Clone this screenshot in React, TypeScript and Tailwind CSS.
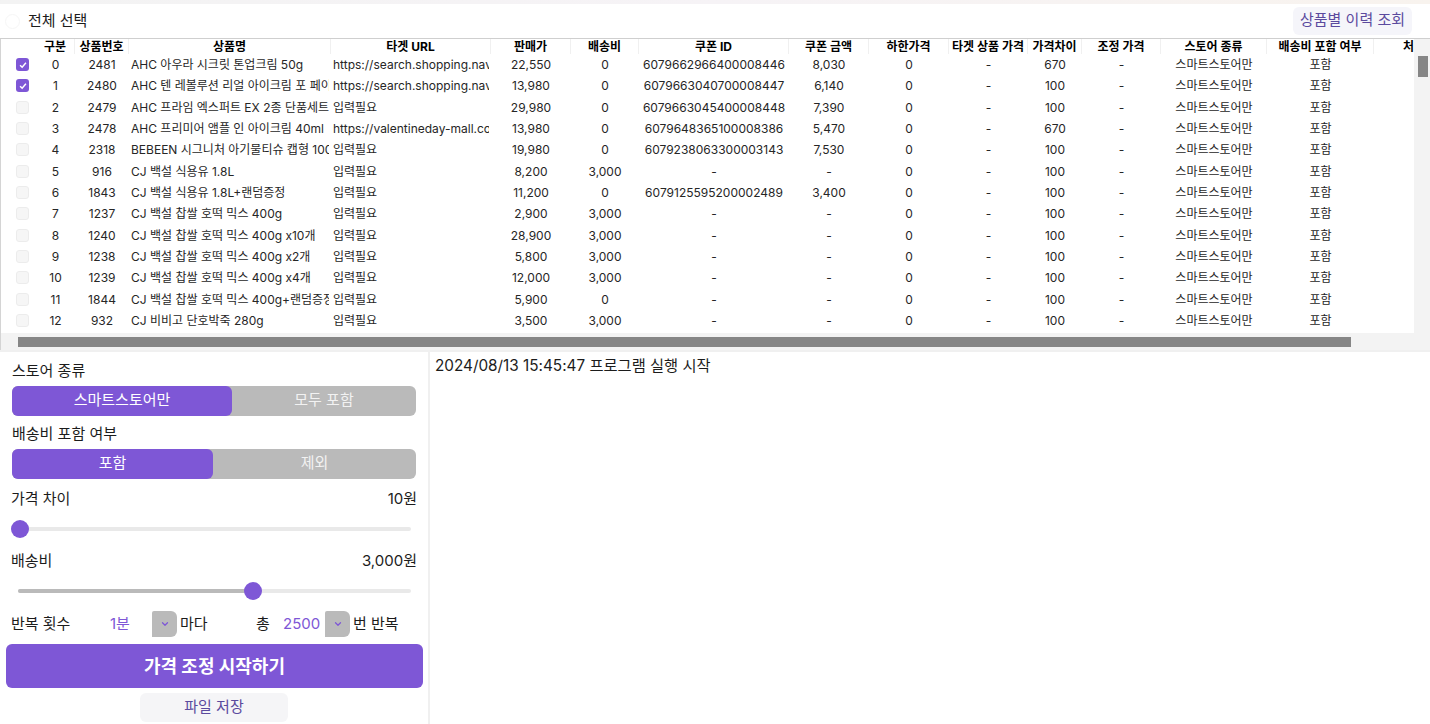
import { ChevronDown } from "lucide-react";

const purple = "bg-[#7e57d6]";

// 컬럼 폭은 헤더 구분선 기준
const columns = [
  { title: "", className: "w-[35px]" },
  { title: "구분", className: "w-[39px]" },
  { title: "상품번호", className: "w-[54px]" },
  { title: "상품명", className: "w-[202px]" },
  { title: "타겟 URL", className: "w-[160px]" },
  { title: "판매가", className: "w-[80px]" },
  { title: "배송비", className: "w-[68px]" },
  { title: "쿠폰 ID", className: "w-[150px]" },
  { title: "쿠폰 금액", className: "w-[80px]" },
  { title: "하한가격", className: "w-[80px]" },
  { title: "타겟 상품 가격", className: "w-[79px]" },
  { title: "가격차이", className: "w-[54px]" },
  { title: "조정 가격", className: "w-[79px]" },
  { title: "스토어 종류", className: "w-[106px]" },
  { title: "배송비 포함 여부", className: "w-[107px]" },
  { title: "처리 상태", className: "w-[106px]" },
];

const rows = [
  { no: "2481", name: "AHC 아우라 시크릿 톤업크림 50g", url: "https://search.shopping.naver.com/", price: "22,550", ship: "0", id: "6079662966400008446", coupon: "8,030", gap: "670", checked: true },
  { no: "2480", name: "AHC 텐 레볼루션 리얼 아이크림 포 페이스", url: "https://search.shopping.naver.com/", price: "13,980", ship: "0", id: "6079663040700008447", coupon: "6,140", gap: "100", checked: true },
  { no: "2479", name: "AHC 프라임 엑스퍼트 EX 2종 단품세트", url: "입력필요", price: "29,980", ship: "0", id: "6079663045400008448", coupon: "7,390", gap: "100" },
  { no: "2478", name: "AHC 프리미어 앰플 인 아이크림 40ml", url: "https://valentineday-mall.com/", price: "13,980", ship: "0", id: "6079648365100008386", coupon: "5,470", gap: "670" },
  { no: "2318", name: "BEBEEN 시그니처 아기물티슈 캡형 100매", url: "입력필요", price: "19,980", ship: "0", id: "6079238063300003143", coupon: "7,530", gap: "100" },
  { no: "916", name: "CJ 백설 식용유 1.8L", url: "입력필요", price: "8,200", ship: "3,000", id: "-", coupon: "-", gap: "100" },
  { no: "1843", name: "CJ 백설 식용유 1.8L+랜덤증정", url: "입력필요", price: "11,200", ship: "0", id: "6079125595200002489", coupon: "3,400", gap: "100" },
  { no: "1237", name: "CJ 백설 찹쌀 호떡 믹스 400g", url: "입력필요", price: "2,900", ship: "3,000", id: "-", coupon: "-", gap: "100" },
  { no: "1240", name: "CJ 백설 찹쌀 호떡 믹스 400g x10개", url: "입력필요", price: "28,900", ship: "3,000", id: "-", coupon: "-", gap: "100" },
  { no: "1238", name: "CJ 백설 찹쌀 호떡 믹스 400g x2개", url: "입력필요", price: "5,800", ship: "3,000", id: "-", coupon: "-", gap: "100" },
  { no: "1239", name: "CJ 백설 찹쌀 호떡 믹스 400g x4개", url: "입력필요", price: "12,000", ship: "3,000", id: "-", coupon: "-", gap: "100" },
  { no: "1844", name: "CJ 백설 찹쌀 호떡 믹스 400g+랜덤증정", url: "입력필요", price: "5,900", ship: "0", id: "-", coupon: "-", gap: "100" },
  { no: "932", name: "CJ 비비고 단호박죽 280g", url: "입력필요", price: "3,500", ship: "3,000", id: "-", coupon: "-", gap: "100" },
];

function Cell({ index, left, children }: { index: number; left?: boolean; children?: React.ReactNode }) {
  return (
    <div className={`${columns[index].className} shrink-0 px-[2px] ${left ? "text-left" : "text-center"}`}>
      <div className="overflow-hidden whitespace-nowrap">{children}</div>
    </div>
  );
}

function TableHeader() {
  return (
    <div className="flex h-[15px] items-center text-[12px] font-bold leading-[15px] text-black">
      {columns.map((col, i) => (
        <div key={i} className={`${col.className} shrink-0 overflow-hidden whitespace-nowrap border-r border-[#f0f0f0] text-center`}>
          {col.title || " "}
        </div>
      ))}
    </div>
  );
}

function CheckBox({ checked }: { checked?: boolean }) {
  if (checked) {
    return (
      <div className={`mx-auto flex h-[13px] w-[13px] items-center justify-center rounded-[3px] ${purple}`}>
        <svg viewBox="0 0 12 12" className="h-[10px] w-[10px]" fill="none" stroke="white" strokeWidth="1.8">
          <path d="M2.5 6.2 5 8.6 9.5 3.4" />
        </svg>
      </div>
    );
  }
  return <div className="mx-auto h-[13px] w-[13px] rounded-[3px] border border-[#ececec] bg-[#f6f6f6]" />;
}

function Segment({ on, off, onWidth }: { on: string; off: string; onWidth: string }) {
  return (
    <div className="mx-[12px] flex h-[30px] rounded-[6px] bg-[#bababa] text-[15px] leading-[28px] text-white">
      <div className={`${onWidth} ${purple} rounded-[6px] text-center`}>{on}</div>
      <div className="flex-1 text-center text-[#f2f2f2]">{off}</div>
    </div>
  );
}

function Slider({ fill, thumb }: { fill: string; thumb: string }) {
  return (
    <div className="relative ml-[18px] mr-[17px] h-[4px] rounded-full bg-[#e9e9e9]">
      <div className={`h-full rounded-full bg-[#bababa] ${fill}`} />
      <div className={`absolute top-[-7px] h-[18px] w-[18px] rounded-full ${purple} ${thumb}`} />
    </div>
  );
}

function SelectBox() {
  return (
    <div className="flex h-[26px] w-[25px] shrink-0 items-center justify-center rounded-r-[6px] rounded-tl-[2px] bg-[#bababa]">
      <ChevronDown size={10} strokeWidth={3} className="text-[#7e57d6]" />
    </div>
  );
}

export default function App() {
  return (
    <div
      className="h-[724px] w-[1430px] overflow-hidden bg-white text-[#1c1c1c]"
      style={{ fontFamily: 'Inter, "Noto Sans CJK KR", sans-serif' }}
    >
      <div className="h-[4px] bg-gradient-to-r from-[#f3f3f3] via-[#f6f3f6] to-[#f8f3ee]" />

      {/* 상단 바 */}
      <div className="flex h-[34px] items-center justify-between pl-[5px] pr-[18px]">
        <div className="flex items-center gap-[8px]">
          <div className="h-[15px] w-[15px] rounded-full border border-[#f6f6f6]" />
          <span className="text-[15px]">전체 선택</span>
        </div>
        <button className="mt-[-1px] h-[28px] w-[119px] rounded-[6px] bg-[#f5f5fa] text-[15px] text-[#5b4a9e]">상품별 이력 조회</button>
      </div>

      {/* 상품 테이블 */}
      <div className="flex h-[312px] border-t border-[#cfcfcf]">
        <div className="flex w-[1414px] flex-col border-l border-[#d4d4d4]">
          <div className="h-[294px] overflow-hidden">
            <div className="w-[1500px]">
              <TableHeader />
              {rows.map((row, i) => (
                <div key={row.no} className="flex h-[21.33px] items-center text-[12px] leading-[21px] text-[#262626]">
                  <Cell index={0}><div className="ml-[8px]"><CheckBox checked={row.checked} /></div></Cell>
                  <Cell index={1}>{i}</Cell>
                  <Cell index={2}>{row.no}</Cell>
                  <Cell index={3} left>{row.name}</Cell>
                  <Cell index={4} left>{row.url}</Cell>
                  <Cell index={5}>{row.price}</Cell>
                  <Cell index={6}>{row.ship}</Cell>
                  <Cell index={7}>{row.id}</Cell>
                  <Cell index={8}>{row.coupon}</Cell>
                  <Cell index={9}>0</Cell>
                  <Cell index={10}>-</Cell>
                  <Cell index={11}>{row.gap}</Cell>
                  <Cell index={12}>-</Cell>
                  <Cell index={13}>스마트스토어만</Cell>
                  <Cell index={14}>포함</Cell>
                </div>
              ))}
            </div>
          </div>
          <div className="flex h-[17px] items-center bg-[#f3f3f3] pl-[17px]">
            <div className="h-[10px] w-[1333px] bg-[#868686]" />
          </div>
        </div>
        <div className="w-[16px] bg-[#f3f3f3] pl-[4px] pt-[17px]">
          <div className="h-[21px] w-[10px] bg-[#868686]" />
        </div>
      </div>

      {/* 하단 영역 */}
      <div className="flex h-[374px] border-t-2 border-[#f0f0f0]">
        <div className="w-[428px] shrink-0">
          <div className="ml-[12px] mt-[9px] text-[15px] leading-[20px]">스토어 종류</div>
          <div className="mt-[5px]"><Segment on="스마트스토어만" off="모두 포함" onWidth="w-[220px]" /></div>
          <div className="ml-[12px] mt-[8px] text-[15px] leading-[20px]">배송비 포함 여부</div>
          <div className="mt-[5px]"><Segment on="포함" off="제외" onWidth="w-[201px]" /></div>

          <div className="mx-[11px] mt-[10px] flex justify-between text-[15px] leading-[20px]">
            <span>가격 차이</span>
            <span>10원</span>
          </div>
          <div className="mt-[18px]"><Slider fill="w-0" thumb="left-[-7px]" /></div>
          <div className="mx-[11px] mt-[20px] flex justify-between text-[15px] leading-[20px]">
            <span>배송비</span>
            <span>3,000원</span>
          </div>
          <div className="mt-[18px]"><Slider fill="w-[235px]" thumb="left-[226px]" /></div>

          <div className="ml-[11px] mt-[18px] flex h-[26px] items-center text-[15px]">
            <span className="w-[99px]">반복 횟수</span>
            <span className="w-[42px] text-[#7e57d6]">1분</span>
            <SelectBox />
            <span className="ml-[3px] w-[76px]">마다</span>
            <span className="w-[27px]">총</span>
            <span className="w-[42px] text-[#7e57d6]">2500</span>
            <SelectBox />
            <span className="ml-[3px]">번 반복</span>
          </div>

          <button className={`ml-[6px] mt-[7px] block h-[44px] w-[417px] rounded-[6px] text-[18px] font-bold text-white ${purple}`}>
            가격 조정 시작하기
          </button>
          <button className="ml-[140px] mt-[5px] block h-[29px] w-[148px] rounded-[6px] bg-[#f5f5f7] text-[15px] text-[#5b4a9e]">
            파일 저장
          </button>
        </div>
        <div className="flex-1 border-l-2 border-[#f0f0f0] px-[5px] pt-[4px] text-[15.3px] leading-[20px]">
          2024/08/13 15:45:47 프로그램 실행 시작
        </div>
      </div>
    </div>
  );
}
